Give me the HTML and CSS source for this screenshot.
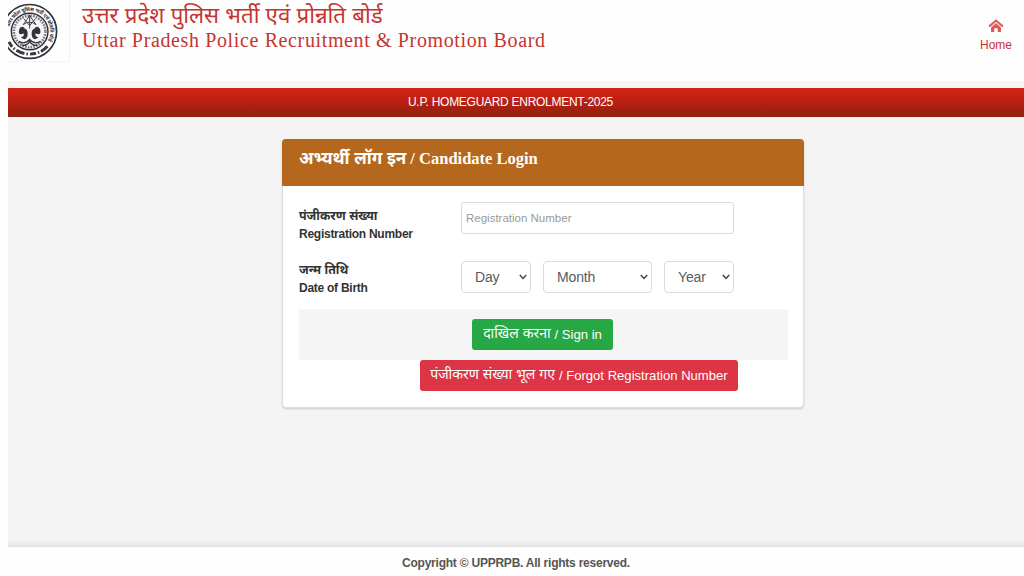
FILE: index.html
```html
<!DOCTYPE html>
<html lang="hi">
<head>
<meta charset="utf-8">
<title>Candidate Login</title>
<link rel="stylesheet" href="styles.css">
</head>
<body>
<div class="page">
  <header class="header">
    <svg class="logo" viewBox="0 0 62 62" width="62" height="62" aria-label="Board emblem">
      <defs><path id="ring" d="M1.7 27.5A20.8 20.8 0 1 1 38 45.3"/></defs>
      <circle cx="22" cy="32" r="27.4" fill="#fff" stroke="#30303a" stroke-width="1.7"/>
      <text class="ring-text"><textPath href="#ring" textLength="70">उत्तर प्रदेश पुलिस भर्ती एवं प्रोन्नति बोर्ड</textPath></text>
      <path d="M1 42.5Q7 54.5 22 55Q34 54.5 40 47" fill="none" stroke="#3a3a44" stroke-width="3" stroke-dasharray="6 2 1.5 2 9 2 1.5 2"/>
      <circle cx="22" cy="32" r="18.6" fill="#f4f4f6" stroke="#30303a" stroke-width="1.5"/>
      <circle cx="22" cy="32" r="16" fill="none" stroke="#77777f" stroke-width="2.6" stroke-dasharray="1.6 1.2"/>
      <g fill="none" stroke="#3b3b44" stroke-width="1">
        <path d="M22 15V29M15.5 25L22 16l6.5 9Q22 20 15.5 25Z"/>
        <path d="M16 19l6 7 6-7"/>
      </g>
      <path d="M12.5 28q3-2 4.500 1 3 1 3 5 0 5-3.500 6l-3.500-2q4-1 3-4-5 2-5-1.500 0-3 1.500-4.500zM31.500 28q-3-2-4.500 1-3 1-3 5 0 5 3.500 6l3.500-2q-4-1-3-4 5 2 5-1.500 0-3-1.500-4.500z" fill="#33333c"/>
      <path d="M11 42q6 4 11-2 5 6 11 2M14 46q5 1 8-4 3 5 8 4" fill="none" stroke="#33333c" stroke-width="1.4"/>
    </svg>
    <div class="titles">
      <div class="title-hi">उत्तर प्रदेश पुलिस भर्ती एवं प्रोन्नति बोर्ड</div>
      <div class="title-en">Uttar Pradesh Police Recruitment &amp; Promotion Board</div>
    </div>
    <a class="home">
      <svg viewBox="0 0 16 14" width="16" height="14"><path d="M1 7.6L8 1.6l7 6" fill="none" stroke="#dc5a58" stroke-width="2"/><path d="M3 8l5-4.3L13 8v5H9.7V9.3H6.3V13H3z" fill="#dc5a58"/><path d="M2.8 8.6L8 4.3l5.2 4.3" fill="none" stroke="#f7cfcd" stroke-width=".6"/></svg>
      <span>Home</span>
    </a>
  </header>
  <div class="banner"><span>U.P. HOMEGUARD ENROLMENT-2025</span></div>
  <main class="main">
    <form class="card">
      <h1 class="card-head"><span class="head-hi">अभ्यर्थी लॉग इन</span><span class="head-en">/ Candidate Login</span></h1>
      <div class="card-body">
        <div class="row row-reg">
          <label class="label"><span class="lab-hi">पंजीकरण संख्या</span><span class="lab-en">Registration Number</span></label>
          <input class="control reg" placeholder="Registration Number">
        </div>
        <div class="row row-dob">
          <label class="label"><span class="lab-hi">जन्म तिथि</span><span class="lab-en">Date of Birth</span></label>
          <div class="selects">
            <div class="control select day"><span>Day</span><svg viewBox="0 0 8 6" width="8" height="6"><path d="M.8 1L4 4.4 7.2 1"/></svg></div>
            <div class="control select month"><span>Month</span><svg viewBox="0 0 8 6" width="8" height="6"><path d="M.8 1L4 4.4 7.2 1"/></svg></div>
            <div class="control select year"><span>Year</span><svg viewBox="0 0 8 6" width="8" height="6"><path d="M.8 1L4 4.4 7.2 1"/></svg></div>
          </div>
        </div>
        <div class="actions"><button type="button" class="btn signin"><span class="btn-hi">दाखिल करना</span><span class="btn-en">/ Sign in</span></button></div>
        <button type="button" class="btn forgot"><span class="btn-hi">पंजीकरण संख्या भूल गए</span><span class="btn-en">/ Forgot Registration Number</span></button>
      </div>
    </form>
  </main>
  <footer class="footer">Copyright © UPPRPB. All rights reserved.</footer>
</div>
</body>
</html>
```

FILE: styles.css
```css
* { box-sizing: border-box; }
body { margin: 0; background: #fefefe; font-family: "Liberation Sans", "Noto Sans Devanagari", "Noto Sans", sans-serif; overflow: hidden; }
.page { height: 576px; padding-left: 8px; display: flex; flex-direction: column; }
.header { height: 81px; display: flex; align-items: flex-start; }
.logo { flex: none; border-right: 1px solid #f2f2f2; border-bottom: 1px solid #f5f5f5; }
.ring-text { font-size: 5.2px; font-weight: 700; fill: #30303a; }
.titles { padding-left: 12px; color: #c5352f; white-space: nowrap; }
.title-hi { height: 29px; line-height: 31px; font-size: 22.25px; }
.title-en { font-family: "Liberation Serif", serif; font-size: 20px; line-height: 23px; letter-spacing: 0.63px; }
.home { margin-left: auto; margin-right: 12px; padding-top: 19px; display: flex; flex-direction: column; align-items: center; color: #cf2e33; font-size: 12px; line-height: 14px; }
.home span { margin-top: 5px; }
.banner { height: 36px; flex: none; padding-top: 7px; background: #f5f5f4; color: #fff; font-size: 12px; letter-spacing: -0.28px; line-height: 28px; text-align: center; }
.banner span { display: block; height: 29px; padding-right: 11px; background: linear-gradient(#d52518, #b82013 50%, #8d210e); }
.main { height: 430px; flex: none; padding: 22px 0 0 274px; background: linear-gradient(#f4f4f4 424px, #e2e2e2); }
.card { width: 522px; height: 269px; background: #fff; border: 1px solid #dedede; border-radius: 4px; box-shadow: 0 1px 2px #ccc; }
.card-head { display: flex; gap: 4px; margin: -1px -1px 0; height: 47px; padding-left: 17px; background: #b5681d; color: #fff; border-radius: 4px 4px 0 0; white-space: nowrap; line-height: 39px; }
.head-hi { font-size: 17px; }
.head-en { font-family: "Liberation Serif", serif; font-size: 16.5px; }
.card-body { padding: 16px 15px 0 16px; }
.row { display: flex; }
.row-reg { height: 59px; }
.row-dob { height: 48px; }
.label { width: 162px; display: flex; flex-direction: column; color: #333; font-weight: 700; font-size: 12px; line-height: 18px; padding-top: 5px; white-space: nowrap; }
.row-dob .label { padding-top: 0; }
.lab-hi { height: 18px; font-size: 12.4px; }
.lab-en { letter-spacing: -0.26px; }
.control { height: 32px; background: #fff; border: 1px solid #d9dcde; border-radius: 4px; font-family: inherit; }
.reg { width: 273px; border-radius: 3px; padding: 0 4px 1px; font-size: 11.5px; outline: 0; }
.reg::placeholder { color: #999; opacity: 1; }
.selects { display: flex; }
.select { display: flex; align-items: center; justify-content: space-between; padding: 0 3px 0 13px; color: #555b5e; font-size: 14px; letter-spacing: -0.15px; }
.select path { fill: none; stroke: #3f4548; stroke-width: 1.5; }
.day { width: 70px; }
.month { width: 109px; margin-left: 12px; }
.year { width: 70px; margin-left: 12px; }
.actions { height: 51px; display: flex; justify-content: center; align-items: center; background: #f5f5f5; padding-right: 2px; }
.btn { height: 31px; display: flex; align-items: center; justify-content: center; gap: 4px; border: 0; border-radius: 3px; color: #fff; font-family: inherit; font-size: 13px; white-space: nowrap; padding: 0; }
.btn-hi { font-size: 14px; }
.btn-en { padding-bottom: 1px; font-size: 13.1px; }
.signin { width: 141px; background: #28a745; }
.forgot { width: 318px; margin-left: 121px; background: #dc3545; }
.footer { padding-top: 9px; text-align: center; color: #555; font-size: 12px; letter-spacing: -0.23px; line-height: 14px; font-weight: 700; }
```
